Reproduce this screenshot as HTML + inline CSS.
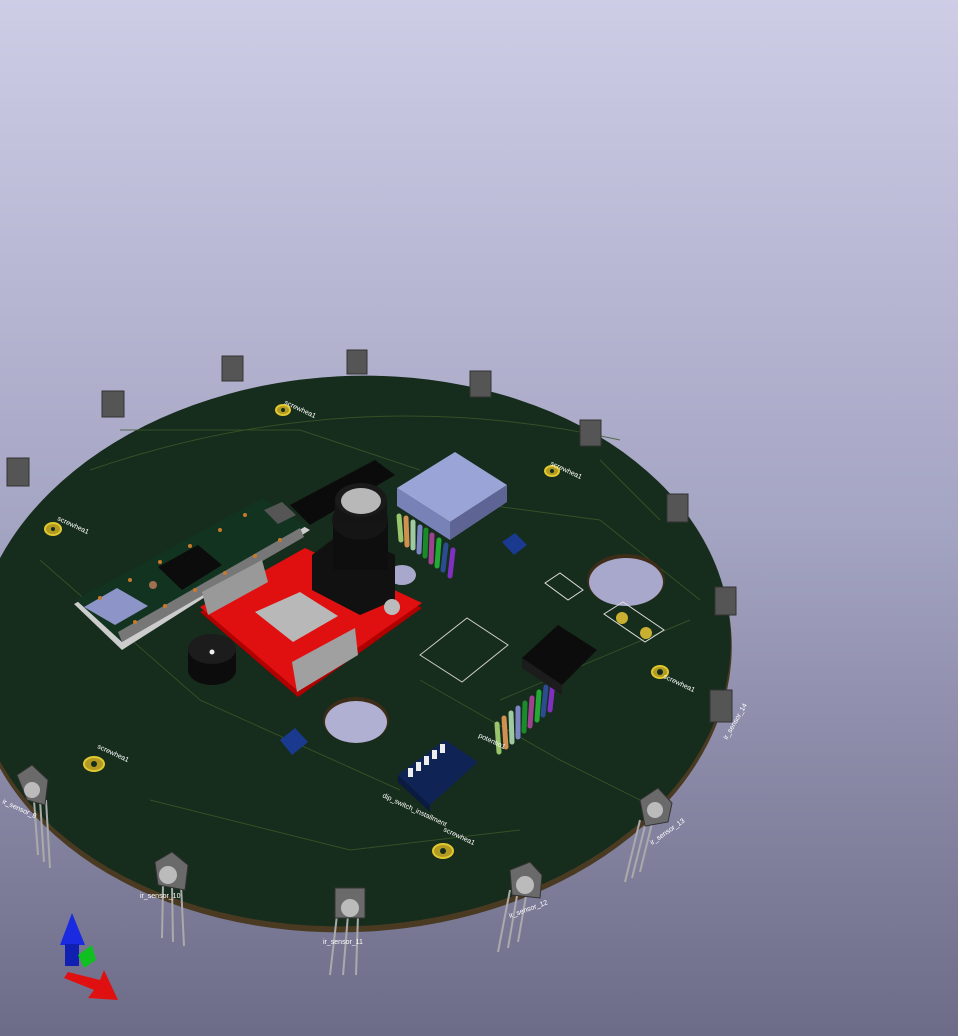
<!DOCTYPE html>
<html><head><style>
html,body{margin:0;padding:0;width:958px;height:1036px;overflow:hidden}
svg{display:block}
text{font-family:"Liberation Sans",sans-serif;fill:#fff}
</style></head><body>
<svg width="958" height="1036" viewBox="0 0 958 1036">
<defs>
<linearGradient id="bg" x1="0" y1="0" x2="0" y2="1">
<stop offset="0" stop-color="#cdcde6"/><stop offset="0.5" stop-color="#a5a5c4"/><stop offset="1" stop-color="#6c6c88"/>
</linearGradient>
</defs>
<rect width="958" height="1036" fill="url(#bg)"/>
<ellipse cx="352" cy="656" rx="380" ry="276" fill="#4a3a22" transform="rotate(-3 352 656)"/>
<ellipse cx="352" cy="651" rx="379" ry="275" fill="#162c1c" transform="rotate(-3 352 651)"/>
<g stroke="#3c5a2a" stroke-width="1" fill="none" opacity="0.8">
<path d="M120 430 L300 430 L420 470 M40 560 L200 700 L400 790 M500 700 L690 620 M450 500 L600 520 L700 600 M150 800 L350 850 L520 830 M600 460 L660 520 M420 680 L560 760 L640 800"/>
<path d="M90 470 Q352 380 620 440" />
</g>
<ellipse cx="356" cy="720" rx="33" ry="23" fill="#3c2c18"/>
<ellipse cx="356" cy="722" rx="31" ry="21" fill="#b0b0d2"/>
<ellipse cx="626" cy="580" rx="39" ry="26" fill="#3c2c18"/>
<ellipse cx="626" cy="582" rx="37" ry="24" fill="#a8a8cc"/>
<ellipse cx="402" cy="575" rx="14" ry="10" fill="#a8a8cc"/>
<g fill="#b39a20" stroke="#e0c830" stroke-width="2">
<ellipse cx="283" cy="410" rx="7" ry="5"/><ellipse cx="552" cy="471" rx="7" ry="5"/><ellipse cx="53" cy="529" rx="8" ry="6"/>
<ellipse cx="660" cy="672" rx="8" ry="6"/><ellipse cx="94" cy="764" rx="10" ry="7"/><ellipse cx="443" cy="851" rx="10" ry="7"/>
</g>
<g fill="#162c1c"><circle cx="283" cy="410" r="2"/><circle cx="552" cy="471" r="2"/><circle cx="53" cy="529" r="2"/><circle cx="660" cy="672" r="3"/><circle cx="94" cy="764" r="3"/><circle cx="443" cy="851" r="3"/></g>
<!-- teensy -->
<polygon points="74,604 262,502 310,530 122,650" fill="#ccc"/>
<polygon points="76,600 262,498 306,526 122,642" fill="#123320"/>
<polygon points="158,567 198,545 222,565 182,590" fill="#0c0c0c"/>
<polygon points="84,607 117,588 148,606 115,625" fill="#8c94c8"/>
<polygon points="264,510 282,502 296,515 278,524" fill="#555"/>
<polygon points="118,632 300,528 304,537 122,642" fill="#777"/>
<g fill="#c77a2a"><circle cx="100" cy="598" r="2"/><circle cx="130" cy="580" r="2"/><circle cx="160" cy="562" r="2"/><circle cx="190" cy="546" r="2"/><circle cx="220" cy="530" r="2"/><circle cx="245" cy="515" r="2"/><circle cx="135" cy="622" r="2"/><circle cx="165" cy="606" r="2"/><circle cx="195" cy="590" r="2"/><circle cx="225" cy="573" r="2"/><circle cx="255" cy="556" r="2"/><circle cx="280" cy="540" r="2"/></g>
<circle cx="153" cy="585" r="4" fill="#a07050"/>
<polygon points="290,505 375,460 395,475 310,525" fill="#0b0b0b"/>
<!-- red board -->
<polygon points="200,612 305,552 422,608 298,697" fill="#b00000"/>
<polygon points="200,607 305,548 422,603 297,690" fill="#e01010"/>
<polygon points="255,612 300,592 338,616 293,642" fill="#b8b8b8"/>
<polygon points="202,592 262,560 268,582 208,615" fill="#999"/>
<polygon points="292,662 355,628 358,655 297,692" fill="#a0a0a0"/>
<polygon points="312,555 345,530 395,555 395,600 360,615 312,590" fill="#111"/>
<rect x="333" y="520" width="55" height="50" fill="#0e0e0e"/>
<ellipse cx="360" cy="520" rx="28" ry="20" fill="#151515"/>
<rect x="335" y="500" width="52" height="22" fill="#141414"/>
<ellipse cx="361" cy="500" rx="26" ry="17" fill="#1a1a1a"/>
<ellipse cx="361" cy="501" rx="20" ry="13" fill="#b8b8b8"/>
<circle cx="392" cy="607" r="8" fill="#bbb"/>
<rect x="188" y="648" width="48" height="22" fill="#0c0c0c"/>
<ellipse cx="212" cy="670" rx="24" ry="15" fill="#0c0c0c"/>
<ellipse cx="212" cy="649" rx="24" ry="15" fill="#1c1c1c"/>
<circle cx="212" cy="652" r="2.5" fill="#eee"/>
<polygon points="397,488 455,452 507,485 450,522" fill="#9aa4d6"/>
<polygon points="397,488 450,522 450,540 397,506" fill="#7982b6"/>
<polygon points="450,522 507,485 507,502 450,540" fill="#5e6594"/>
<g stroke-width="5" stroke-linecap="round">
<line x1="399" y1="516" x2="401" y2="540" stroke="#99c56c"/><line x1="406" y1="518" x2="407" y2="545" stroke="#d09050"/>
<line x1="413" y1="522" x2="413" y2="548" stroke="#9fc9a0"/><line x1="420" y1="527" x2="419" y2="552" stroke="#7c84c4"/>
<line x1="426" y1="530" x2="425" y2="556" stroke="#1a8a2a"/><line x1="432" y1="535" x2="431" y2="562" stroke="#a04090"/>
<line x1="439" y1="540" x2="437" y2="566" stroke="#22aa33"/><line x1="446" y1="545" x2="443" y2="570" stroke="#2c4c90"/>
<line x1="453" y1="550" x2="450" y2="576" stroke="#8030c0"/>
<line x1="497" y1="724" x2="499" y2="752" stroke="#99c56c"/><line x1="504" y1="718" x2="506" y2="747" stroke="#d09050"/>
<line x1="511" y1="713" x2="512" y2="742" stroke="#9fc9a0"/><line x1="518" y1="708" x2="518" y2="737" stroke="#7c84c4"/>
<line x1="525" y1="703" x2="524" y2="731" stroke="#1a8a2a"/><line x1="532" y1="698" x2="530" y2="726" stroke="#a04090"/>
<line x1="539" y1="692" x2="537" y2="720" stroke="#22aa33"/><line x1="546" y1="687" x2="543" y2="715" stroke="#2c4c90"/>
<line x1="553" y1="682" x2="550" y2="710" stroke="#8030c0"/>
</g>
<polygon points="522,658 558,625 597,650 562,685" fill="#0c0c0c"/>
<polygon points="522,658 562,685 562,695 522,668" fill="#1c1c1c"/>
<polygon points="420,655 467,618 508,645 462,682" fill="none" stroke="#ccc"/>
<polygon points="398,775 445,740 478,762 430,805" fill="#0f2454"/>
<polygon points="398,775 430,805 430,812 398,782" fill="#0a1a40"/>
<g fill="#eee"><rect x="408" y="768" width="5" height="9"/><rect x="416" y="762" width="5" height="9"/><rect x="424" y="756" width="5" height="9"/><rect x="432" y="750" width="5" height="9"/><rect x="440" y="744" width="5" height="9"/></g>
<polygon points="502,542 515,533 527,545 514,555" fill="#1a3a90"/>
<polygon points="280,740 295,728 308,742 292,755" fill="#1a3a90"/>
<polygon points="545,583 560,573 583,590 568,600" fill="none" stroke="#ddd"/>
<polygon points="604,614 623,602 664,630 645,642" fill="none" stroke="#ddd"/>
<circle cx="622" cy="618" r="6" fill="#c9b030"/><circle cx="646" cy="633" r="6" fill="#c9b030"/>
<g fill="#555" stroke="#333">
<rect x="7" y="458" width="22" height="28"/><rect x="102" y="391" width="22" height="26"/><rect x="222" y="356" width="21" height="25"/>
<rect x="347" y="350" width="20" height="24"/><rect x="470" y="371" width="21" height="26"/><rect x="580" y="420" width="21" height="26"/>
<rect x="667" y="494" width="21" height="28"/><rect x="715" y="587" width="21" height="28"/><rect x="710" y="690" width="22" height="32"/>
</g>
<g stroke="#aaa" stroke-width="2">
<line x1="34" y1="800" x2="38" y2="855"/><line x1="40" y1="800" x2="44" y2="862"/><line x1="46" y1="800" x2="50" y2="868"/>
<line x1="163" y1="885" x2="162" y2="938"/><line x1="172" y1="885" x2="173" y2="942"/><line x1="181" y1="885" x2="184" y2="946"/>
<line x1="337" y1="915" x2="330" y2="975"/><line x1="348" y1="915" x2="343" y2="975"/><line x1="358" y1="915" x2="356" y2="975"/>
<line x1="510" y1="890" x2="498" y2="952"/><line x1="518" y1="890" x2="508" y2="948"/><line x1="527" y1="890" x2="518" y2="942"/>
<line x1="640" y1="820" x2="625" y2="882"/><line x1="647" y1="818" x2="632" y2="878"/><line x1="654" y1="815" x2="640" y2="872"/>
</g>
<g fill="#6a6a6a" stroke="#333">
<polygon points="17,775 32,765 48,780 45,805 27,800"/><polygon points="155,862 172,852 188,865 185,890 158,885"/>
<rect x="335" y="888" width="30" height="30"/><polygon points="510,870 530,862 542,875 540,898 512,895"/>
<polygon points="640,800 658,788 672,803 668,822 645,826"/>
</g>
<g fill="#bbb"><circle cx="32" cy="790" r="8"/><circle cx="168" cy="875" r="9"/><circle cx="350" cy="908" r="9"/><circle cx="525" cy="885" r="9"/><circle cx="655" cy="810" r="8"/></g>
<g font-size="7">
<text x="284" y="404" transform="rotate(25 284 404)">screwhea1</text>
<text x="550" y="465" transform="rotate(25 550 465)">screwhea1</text>
<text x="57" y="520" transform="rotate(25 57 520)">screwhea1</text>
<text x="663" y="678" transform="rotate(25 663 678)">screwhea1</text>
<text x="97" y="748" transform="rotate(25 97 748)">screwhea1</text>
<text x="443" y="831" transform="rotate(25 443 831)">screwhea1</text>
<text x="382" y="797" transform="rotate(25 382 797)">dip_switch_installment</text>
<text x="478" y="737" transform="rotate(25 478 737)">potentio1</text>
<text x="2" y="803" transform="rotate(25 2 803)">ir_sensor_9</text>
<text x="140" y="898">ir_sensor_10</text>
<text x="323" y="944">ir_sensor_11</text>
<text x="510" y="918" transform="rotate(-20 510 918)">ir_sensor_12</text>
<text x="652" y="845" transform="rotate(-35 652 845)">ir_sensor_13</text>
<text x="727" y="740" transform="rotate(-60 727 740)">ir_sensor_14</text>
</g>
<polygon points="60,945 72,913 85,945" fill="#1a2ae0"/>
<rect x="65" y="944" width="14" height="22" fill="#1020b0"/>
<polygon points="78,955 92,945 96,960 84,968" fill="#10c020"/>
<polygon points="68,972 100,980 104,970 118,1000 88,998 94,990 64,978" fill="#e01010"/>
</svg>
</body></html>
